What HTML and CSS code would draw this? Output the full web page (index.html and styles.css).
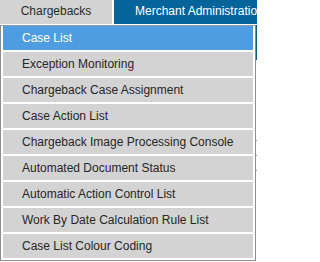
FILE: index.html
```html
<!DOCTYPE html>
<html>
<head>
<meta charset="utf-8">
<link rel="stylesheet" href="styles.css">
</head>
<body>
<div class="page">
  <nav class="tabs">
    <div class="tab tab-active">Chargebacks</div>
    <div class="tab tab-dark">Merchant Administration</div>
  </nav>
  <div class="subbar"></div>
  <div class="content">
    <div class="line"></div>
    <div class="line"></div>
    <div class="line"></div>
  </div>
  <ul class="menu">
    <li class="item selected">Case List</li>
    <li class="item">Exception Monitoring</li>
    <li class="item">Chargeback Case Assignment</li>
    <li class="item">Case Action List</li>
    <li class="item">Chargeback Image Processing Console</li>
    <li class="item">Automated Document Status</li>
    <li class="item">Automatic Action Control List</li>
    <li class="item">Work By Date Calculation Rule List</li>
    <li class="item">Case List Colour Coding</li>
  </ul>
</div>
</body>
</html>
```

FILE: styles.css
```css
html, body {
  margin: 0;
  padding: 0;
  background: #ffffff;
}
.page {
  position: relative;
  width: 257px;
  height: 262px;
  overflow: hidden;
  font-family: "Liberation Sans", Arial, sans-serif;
  font-size: 12px;
}
.tabs {
  display: flex;
  gap: 2px;
  height: 24px;
}
.tab {
  height: 24px;
  line-height: 23px;
  white-space: nowrap;
  overflow: hidden;
}
.tab-active {
  flex: 0 0 112px;
  background: #d3d3d3;
  color: #2a2a2a;
  text-align: center;
}
.tab-dark {
  flex: 1 1 auto;
  background: #05649a;
  color: #ffffff;
  padding-left: 21px;
}
.subbar {
  margin-top: 1px;
  height: 35px;
  background: #0b5b87;
}
.content {
  display: flex;
  flex-direction: column;
  gap: 14px;
  padding-top: 80px;
}
.line {
  height: 1px;
  background: #9a9a9a;
}
.menu {
  position: absolute;
  left: 0;
  top: 25px;
  width: 250px;
  margin: 0;
  padding: 0 2px 0 2px;
  list-style: none;
  background: #ffffff;
  border: 1px solid #8c8c8c;
  border-top-color: #9a9a9a;
}
.item {
  height: 24px;
  line-height: 24px;
  margin-bottom: 2px;
  padding-left: 19px;
  background: #d3d3d3;
  color: #262626;
  white-space: nowrap;
}
.item.selected {
  background: #4e9de2;
  color: #ffffff;
}
```
